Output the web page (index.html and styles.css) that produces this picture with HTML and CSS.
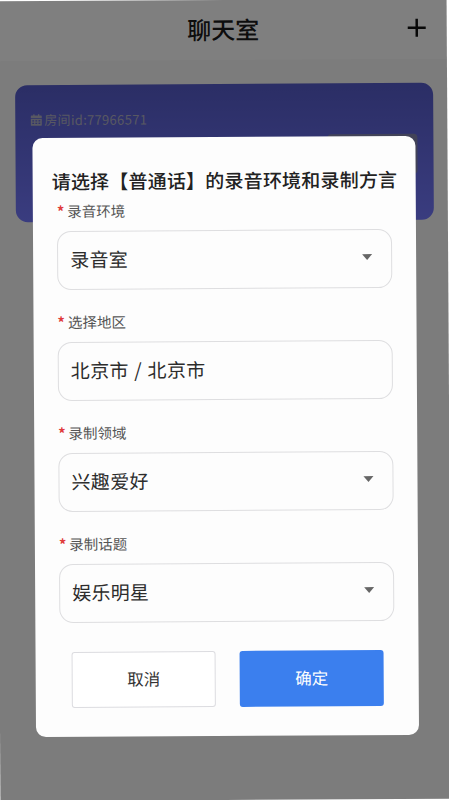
FILE: index.html
```html
<!DOCTYPE html>
<html lang="zh-CN">
<head>
    <meta charset="UTF-8">
    <meta name="viewport" content="width=device-width, initial-scale=1.0">
    <title>聊天室</title>
    <link rel="stylesheet" href="styles.css">
</head>
<body>
    <div class="screen">
        <!-- Page behind the dialog -->
        <header class="topbar">
            <h1>聊天室</h1>
            <svg class="add-icon" viewBox="0 0 20 20" aria-hidden="true">
                <path d="M10 1v18M1 10h18"/>
            </svg>
        </header>

        <section class="room-card">
            <p class="room-id">
                <svg class="calendar-icon" viewBox="0 0 12 12" aria-hidden="true">
                    <path fill-rule="evenodd" d="M3 0h1.300v1.300h3.400V0H9v1.300h1.800c.4 0 .7.3.7.7v1.800H.5V2c0-.4.3-.7.7-.7H3zM.5 4.600h11V11c0 .4-.3.7-.7.7H1.200c-.4 0-.7-.3-.7-.7zM2 6v1.300h1.800V6zm3.100 0v1.300h1.800V6zm3.100 0v1.300H10V6zM2 8.500v1.300h1.800V8.500zm3.100 0v1.300h1.800V8.500zm3.100 0v1.300H10V8.500z"/>
                </svg>
                房间id:77966571
            </p>
            <div class="room-action"></div>
        </section>

        <!-- Dialog -->
        <div class="overlay">
            <form class="dialog">
                <h2>请选择【普通话】的录音环境和录制方言</h2>

                <div class="field">
                    <label>录音环境</label>
                    <div class="select">录音室<span class="caret"></span></div>
                </div>
                <div class="field">
                    <label>选择地区</label>
                    <div class="select">北京市 / 北京市</div>
                </div>
                <div class="field">
                    <label>录制领域</label>
                    <div class="select">兴趣爱好<span class="caret"></span></div>
                </div>
                <div class="field">
                    <label>录制话题</label>
                    <div class="select">娱乐明星<span class="caret"></span></div>
                </div>

                <div class="actions">
                    <button type="button" class="btn-cancel">取消</button>
                    <button type="button" class="btn-ok">确定</button>
                </div>
            </form>
        </div>
    </div>
</body>
</html>
```

FILE: styles.css
```css
html, body {
    height: 100%;
}

html {
    background-color: #fff;
}

body {
    margin: 0;
    font-family: "Noto Sans CJK SC", "Noto Sans", sans-serif;
    color: #222;
    overflow: hidden;
}

/* the whole capture sits slightly tilted */
.screen {
    position: relative;
    width: 451px;
    height: 800px;
    margin-left: -2px;
    padding-left: 2px;
    box-sizing: border-box;
    background-color: #f8f8f8;
    transform: rotate(-0.35deg);
    transform-origin: 226px 400px;
}

.topbar {
    position: relative;
    display: flex;
    justify-content: center;
    align-items: center;
    height: 60px;
    padding: 0 0 4px 2px;
    box-sizing: border-box;
    background-color: #fff;
}

.topbar h1 {
    margin: 0;
    font-size: 24px;
    font-weight: 500;
    color: #1a1a1a;
}

.add-icon {
    position: absolute;
    right: 20px;
    top: 19px;
    width: 20px;
    height: 20px;
    fill: none;
    stroke: #111;
    stroke-width: 2.500;
}

.room-card {
    height: 137px;
    margin: 24px 14px 0 17px;
    padding: 26px 16px 0 15px;
    box-sizing: border-box;
    border-radius: 12px;
    background: linear-gradient(180deg, #565ccb, #7479ff);
}

.room-id {
    display: flex;
    align-items: center;
    gap: 2px;
    margin: 0;
    font-size: 13px;
    line-height: 18px;
    letter-spacing: 0.3px;
    color: #b0b0c4;
}

.calendar-icon {
    width: 12px;
    height: 12px;
    fill: currentColor;
}

.room-action {
    width: 90px;
    height: 40px;
    margin: 7px 0 0 auto;
    border-radius: 4px;
    background-color: #8487b0;
}

.overlay {
    position: absolute;
    inset: 0;
    background-color: rgba(0, 0, 0, 0.5);
}

.dialog {
    position: absolute;
    left: 36px;
    top: 136.500px;
    width: 383px;
    height: 599px;
    padding: 30px 24px 0;
    box-sizing: border-box;
    border-radius: 10px;
    background-color: #fdfdfd;
}

.dialog h2 {
    margin: 0 0 7px -5px;
    font-size: 19px;
    line-height: 26px;
    font-weight: 500;
    letter-spacing: 0.2px;
    white-space: nowrap;
    color: #222;
}

.field {
    margin-bottom: 22px;
}

.field label {
    display: block;
    margin-bottom: 10px;
    font-size: 14.500px;
    line-height: 20px;
    color: #555;
}

.field label::before {
    content: "*";
    margin-right: 3px;
    font-weight: 700;
    color: #e03b3b;
}

.select {
    display: flex;
    justify-content: space-between;
    align-items: center;
    height: 59px;
    padding: 0 19px 3px 12px;
    box-sizing: border-box;
    border: 1.500px solid #dedee0;
    border-radius: 14px;
    font-size: 19px;
    letter-spacing: 0.3px;
    word-spacing: 1px;
    color: #2c2c2c;
}

.caret {
    width: 0;
    height: 0;
    border-left: 5.500px solid transparent;
    border-right: 5.500px solid transparent;
    border-top: 6px solid #666;
}

.actions {
    display: flex;
    gap: 24px;
    margin: 29px 0 0 12px;
}

.actions button {
    width: 144px;
    height: 56px;
    padding: 0 0 2px;
    border-radius: 3px;
    font-family: inherit;
    font-size: 16.500px;
}

.btn-cancel {
    border: 1.500px solid #dcdce0;
    background-color: #fff;
    color: #333;
}

.btn-ok {
    border: none;
    background-color: #3b7fee;
    color: #fff;
}
```
